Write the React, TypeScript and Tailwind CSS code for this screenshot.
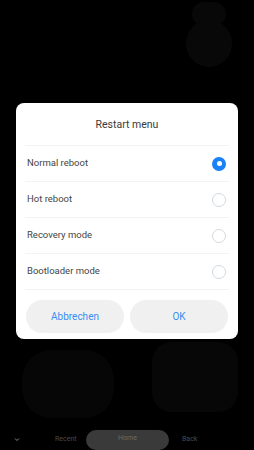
import React from "react";

const items = [
  { label: "Normal reboot", selected: true },
  { label: "Hot reboot", selected: false },
  { label: "Recovery mode", selected: false },
  { label: "Bootloader mode", selected: false },
];

export default function App() {
  return (
    <div
      className="relative w-[254px] h-[450px] bg-black overflow-hidden flex flex-col"
      style={{ fontFamily: "Roboto, 'Noto Sans', sans-serif" }}
    >
      {/* dimmed wallpaper shapes */}
      <div className="absolute left-[186px] top-[20px] w-[46px] h-[47px] rounded-[23px] bg-[#080808]" />
      <div className="absolute left-[192px] top-[2px] w-[34px] h-[24px] rounded-[12px] bg-[#080808]" />
      <div className="absolute left-[22px] top-[350px] w-[92px] h-[68px] rounded-[30px] bg-[#060606]" />
      <div className="absolute left-[152px] top-[342px] w-[86px] h-[70px] rounded-[20px] bg-[#070707]" />

      <div className="relative h-[103px] shrink-0" />
      <div className="relative mx-[16px] w-[222px] h-[236px] bg-white rounded-[8px] flex flex-col">
        <div className="h-[42px] flex items-center justify-center text-[10.5px] text-[#3a3a3a] pt-[2px]">
          Restart menu
        </div>
        <div className="mx-[9px] border-t border-[#f3f3f3]" />
        {items.map((it) => (
          <div key={it.label} className="flex flex-col">
            <div className="h-[35px] flex items-center justify-between pl-[11px] pr-[12px]">
              <span className="text-[9.5px] text-[#444]">{it.label}</span>
              {it.selected ? (
                <div className="w-[14px] h-[14px] rounded-full bg-[#1a82f6] flex items-center justify-center">
                  <div className="w-[5px] h-[5px] rounded-full bg-white" />
                </div>
              ) : (
                <div className="w-[14px] h-[14px] rounded-full border border-[#d3d9e0]" />
              )}
            </div>
            <div className="mx-[9px] border-t border-[#f3f3f3]" />
          </div>
        ))}
        <div className="flex gap-[6px] px-[10px] pt-[10px]">
          <button className="flex-1 h-[33px] rounded-full bg-[#f0f0f0] text-[10px] text-[#3a8ef2]">
            Abbrechen
          </button>
          <button className="flex-1 h-[33px] rounded-full bg-[#f0f0f0] text-[10px] text-[#3a8ef2]">
            OK
          </button>
        </div>
      </div>
      <div className="flex-1" />
      <div className="relative h-[20px] text-[7px] text-[#4a4a4a]">
        <svg className="absolute left-[14px] top-[7px]" width="6" height="5" viewBox="0 0 6 5">
          <path d="M1 1.5 L3 3.5 L5 1.5" stroke="#888" strokeWidth="1" fill="none" />
        </svg>
        <span className="absolute left-[55px] top-[4px]">Recent</span>
        <div className="absolute left-[86px] top-0 w-[83px] h-[20px] rounded-full bg-[#3a3a3a] flex items-center justify-center text-[#6a6a6a] pb-[3px]">
          Home
        </div>
        <span className="absolute left-[182px] top-[4px]">Back</span>
      </div>
    </div>
  );
}
